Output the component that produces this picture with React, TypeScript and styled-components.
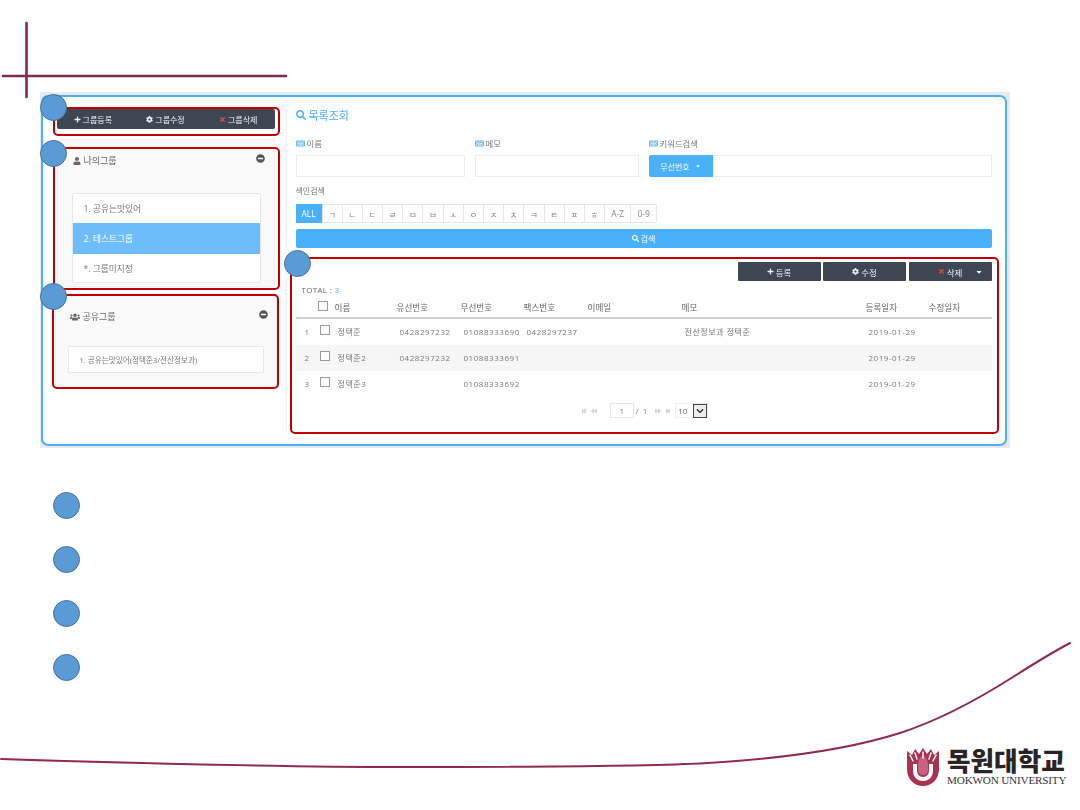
import React from "react";
import styled, { createGlobalStyle } from "styled-components";
import {
  FaPlus, FaCog, FaTimes, FaUser, FaUsers, FaMinusCircle, FaSearch, FaCaretDown,
  FaKeyboard, FaStepBackward, FaBackward, FaForward, FaStepForward, FaChevronDown,
} from "react-icons/fa";

const Global = createGlobalStyle`
  html, body { margin: 0; padding: 0; background: #fff; }
  * { box-sizing: border-box; }
  body { font-family: "Open Sans", "Noto Sans CJK KR", sans-serif; font-size: 8px; color: #777; }
`;

const BLUE = "#4ab0f8";
const DARK = "#3d4651";

const Slide = styled.div`
  position: relative;
  width: 1080px;
  height: 810px;
  background: #fff;
  overflow: hidden;
`;
const Decor = styled.svg`
  position: absolute;
  inset: 0;
`;
const WindowShade = styled.div`
  position: absolute;
  left: 40px;
  top: 92px;
  width: 970px;
  height: 356px;
  background: #e9e9ee;
  padding: 3px 3px 2px 1px;
  filter: blur(0.35px);
`;
const Window = styled.div`
  display: flex;
  width: 100%;
  height: 100%;
  background: #fff;
  border: 2.5px solid ${BLUE};
  border-radius: 7px;
  padding-left: 0.5px;
`;
const Sidebar = styled.aside`
  width: 243px;
  margin: 10px 0 12px;
  padding: 2px 11px 0 13px;
  border-right: 1px dotted #e4e4e4;
  flex: none;
`;
const ButtonBar = styled.div`
  display: flex;
  height: 20px;
  background: ${DARK};
  border-radius: 2px;
`;
const BarButton = styled.div`
  flex: 1;
  display: flex;
  align-items: center;
  justify-content: center;
  gap: 2px;
  color: #eef0f2;
  font-size: 8px;
`;
const IconWrap = styled.span<{ $c?: string; $s?: number }>`
  display: inline-flex;
  color: ${(p) => p.$c || "inherit"};
  font-size: ${(p) => p.$s || 7}px;
`;
const Panel = styled.section<{ $top: number; $h: number; $shift?: number; $w?: number }>`
  margin-top: ${(p) => p.$top}px;
  margin-left: ${(p) => p.$shift || 0}px;
  width: ${(p) => p.$w || 218}px;
  height: ${(p) => p.$h}px;
  background: #f9f9f9;
  border: 1px solid #f0f0f0;
`;
const PanelHead = styled.div<{ $h: number; $pl: number; $pr: number }>`
  display: flex;
  align-items: center;
  justify-content: space-between;
  height: ${(p) => p.$h}px;
  padding: 0 ${(p) => p.$pr}px 0 ${(p) => p.$pl}px;
  color: #666;
  font-size: 9px;
`;
const PanelTitle = styled.div`
  display: flex;
  align-items: center;
  gap: 3px;
`;
const Collapse = styled.span`
  display: inline-flex;
  font-size: 9px;
  color: #555;
  margin-top: -4px;
`;
const GroupList = styled.div<{ $ml: number; $mt: number; $w: number }>`
  margin: ${(p) => p.$mt}px 0 0 ${(p) => p.$ml}px;
  width: ${(p) => p.$w}px;
  background: #fff;
  border: 1px solid #e6e6e6;
  border-radius: 2px;
`;
const GroupItem = styled.div<{ $active?: boolean; $h: number; $pl?: number; $fs?: number }>`
  display: flex;
  align-items: center;
  height: ${(p) => p.$h}px;
  padding-left: ${(p) => p.$pl || 11}px;
  font-size: ${(p) => p.$fs || 8.7}px;
  background: ${(p) => (p.$active ? "#6dbdfb" : "#fff")};
  color: ${(p) => (p.$active ? "#fff" : "#777")};
`;
const Main = styled.main`
  width: 696px;
  margin-left: 9px;
  padding-top: 11px;
  flex: none;
`;
const Title = styled.h2`
  margin: 0;
  display: flex;
  align-items: center;
  gap: 3px;
  height: 14px;
  font-size: 11px;
  font-weight: 400;
  color: ${BLUE};
`;
const Fields = styled.div`
  display: grid;
  grid-template-columns: 169px 164px 343px;
  column-gap: 10px;
  margin-top: 15px;
`;
const Field = styled.div`
  display: flex;
  flex-direction: column;
  gap: 6px;
`;
const FieldLabel = styled.label`
  display: flex;
  align-items: center;
  gap: 2px;
  height: 12px;
  font-size: 8.4px;
  color: #777;
`;
const TextInput = styled.div`
  flex: 1;
  height: 22px;
  background: #fff;
  border: 1px solid #ececec;
`;
const InputGroup = styled.div`
  display: flex;
`;
const GroupDrop = styled.div`
  display: flex;
  align-items: center;
  justify-content: center;
  gap: 5px;
  width: 64px;
  height: 22px;
  background: ${BLUE};
  border-radius: 2px 0 0 2px;
  color: #fff;
  font-size: 8px;
`;
const SectionLabel = styled.div`
  height: 12px;
  margin-top: 8px;
  font-size: 8px;
  color: #777;
`;
const IndexBar = styled.div`
  display: flex;
  width: max-content;
  height: 19px;
  margin-top: 7px;
  border: 1px solid #e6e6e6;
  border-radius: 2px;
`;
const IndexCell = styled.div<{ $w: number; $on?: boolean }>`
  display: flex;
  align-items: center;
  justify-content: center;
  width: ${(p) => p.$w}px;
  margin-top: ${(p) => (p.$on ? -1 : 0)}px;
  margin-bottom: ${(p) => (p.$on ? -1 : 0)}px;
  margin-left: ${(p) => (p.$on ? -1 : 0)}px;
  border-right: 1px solid #e6e6e6;
  background: ${(p) => (p.$on ? BLUE : "#fff")};
  color: ${(p) => (p.$on ? "#fff" : "#888")};
  font-size: 8.5px;
  &:last-child { border-right: 0; }
`;
const SearchButton = styled.div`
  display: flex;
  align-items: center;
  justify-content: center;
  gap: 2px;
  height: 19px;
  margin-top: 6px;
  background: ${BLUE};
  border-radius: 2px;
  color: #fff;
  font-size: 8px;
`;
const Actions = styled.div`
  display: flex;
  justify-content: flex-end;
  gap: 2.5px;
  margin-top: 14px;
`;
const ActionButton = styled.div`
  display: flex;
  align-items: center;
  justify-content: center;
  gap: 2px;
  position: relative;
  width: 83px;
  height: 19px;
  background: ${DARK};
  border-radius: 1px;
  color: #eef0f2;
  font-size: 8.5px;
`;
const ActionCaret = styled.span`
  position: absolute;
  right: 9px;
  display: inline-flex;
  font-size: 8px;
  color: #fff;
`;
const Total = styled.div`
  height: 12px;
  margin-top: 3px;
  padding-left: 6px;
  font-size: 8px;
  color: #666;
  letter-spacing: 0.3px;
  line-height: 12px;
`;
const TotalNum = styled.span`
  color: ${BLUE};
`;
const cols = "22px 17px 62px 64px 63px 64px 94px 184px 63px 1fr";
const HeadRow = styled.div`
  display: grid;
  grid-template-columns: ${cols};
  align-items: center;
  height: 19px;
  margin-top: 4px;
  border-bottom: 2px solid #cfcfcf;
  color: #666;
  font-size: 8.6px;
`;
const Row = styled.div<{ $odd?: boolean }>`
  display: grid;
  grid-template-columns: ${cols};
  align-items: center;
  height: 26px;
  background: ${(p) => (p.$odd ? "#f6f6f6" : "#fff")};
  color: #777;
  font-size: 8px;
  letter-spacing: 0.55px;
`;
const Cell = styled.div<{ $pl?: number }>`
  padding-left: ${(p) => p.$pl ?? 3}px;
  white-space: nowrap;
  padding-bottom: 2px;
`;
const Check = styled.div<{ $raise?: number }>`
  width: 10px;
  height: 10px;
  background: #fff;
  border: 1px solid #9a9a9a;
  margin-top: ${(p) => -(p.$raise || 0)}px;
`;
const Pager = styled.div`
  display: flex;
  align-items: center;
  justify-content: center;
  gap: 4px;
  height: 15px;
  margin-top: 6px;
  padding-left: 2px;
  color: #888;
  font-size: 8px;
`;
const PagerIcon = styled.span`
  display: inline-flex;
  font-size: 6px;
  color: #d2d2d2;
`;
const PageBox = styled.div`
  display: flex;
  align-items: center;
  justify-content: center;
  width: 24px;
  height: 15px;
  margin: 0 -2px 0 9px;
  border: 1px solid #e6e6e6;
  color: #777;
`;
const PageSep = styled.span`
  margin-right: 3px;
  letter-spacing: 1px;
`;
const SizeSelect = styled.div`
  display: flex;
  justify-content: space-between;
  align-items: center;
  width: 33px;
  height: 15px;
  padding-left: 2px;
  border: 1px solid #eee;
  color: #666;
`;
const SizeArrow = styled.span`
  display: flex;
  align-items: center;
  justify-content: center;
  width: 14px;
  height: 14px;
  background: #ededed;
  border: 1px solid #444;
  color: #222;
  font-size: 8px;
`;
const Callout = styled.div<{ $x: number; $y: number; $w: number; $h: number }>`
  position: absolute;
  left: ${(p) => p.$x}px;
  top: ${(p) => p.$y}px;
  width: ${(p) => p.$w}px;
  height: ${(p) => p.$h}px;
  border: 2.5px solid #c00000;
  border-radius: 5px;
`;
const Marker = styled.div`
  width: 27px;
  height: 27px;
  border-radius: 50%;
  background: #5b9bd5;
  border: 1.5px solid #41719c;
`;
const PlacedMarker = styled(Marker)<{ $x: number; $y: number }>`
  position: absolute;
  left: ${(p) => p.$x}px;
  top: ${(p) => p.$y}px;
`;
const Legend = styled.div`
  position: absolute;
  left: 53px;
  top: 492px;
  display: flex;
  flex-direction: column;
  gap: 27px;
`;
const Logo = styled.div`
  position: absolute;
  left: 906px;
  top: 747px;
  display: flex;
  gap: 7px;
`;
const LogoText = styled.div`
  display: flex;
  flex-direction: column;
  gap: 1px;
`;
const LogoKo = styled.div`
  font-family: "Noto Sans CJK KR", sans-serif;
  font-weight: 900;
  font-size: 25.6px;
  line-height: 26px;
  height: 26px;
  letter-spacing: 0;
  color: #2a2426;
  white-space: nowrap;
`;
const LogoEn = styled.div`
  font-family: "Liberation Serif", serif;
  font-size: 11.2px;
  line-height: 12px;
  letter-spacing: -0.2px;
  color: #3a3436;
  white-space: nowrap;
`;

const idx = ["ㄱ","ㄴ","ㄷ","ㄹ","ㅁ","ㅂ","ㅅ","ㅇ","ㅈ","ㅊ","ㅋ","ㅌ","ㅍ","ㅎ"];
const rows = [
  { n: 1, name: "정택준", tel: "0428297232", mob: "01088333690", fax: "0428297237", memo: "전산정보과 정택준" },
  { n: 2, name: "정택준2", tel: "0428297232", mob: "01088333691", fax: "", memo: "" },
  { n: 3, name: "정택준3", tel: "", mob: "01088333692", fax: "", memo: "" },
];
const KeyIcon = () => <IconWrap $c="#6bb8ef" $s={9}><FaKeyboard /></IconWrap>;

export default function App() {
  return (
    <Slide>
      <Global />
      <Decor width="1080" height="810" viewBox="0 0 1080 810">
        <g stroke="#7f2b4c" strokeWidth="2.6" fill="none" strokeLinecap="round">
          <path d="M26.5 23V97" />
          <path d="M3 76H286" />
        </g>
        <path
          d="M1 759 C130 763 280 767 400 767 C500 767 620 767 700 763.5 C780 759 850 749 900 733 C940 720 980 698 1013 677 C1035 663 1055 651 1070 643"
          stroke="#8f2b4d" strokeWidth="2" fill="none" strokeLinecap="round"
        />
      </Decor>

      <WindowShade>
        <Window>
          <Sidebar>
            <ButtonBar>
              <BarButton><IconWrap><FaPlus /></IconWrap>그룹등록</BarButton>
              <BarButton><IconWrap><FaCog /></IconWrap>그룹수정</BarButton>
              <BarButton><IconWrap $c="#e8484a"><FaTimes /></IconWrap>그룹삭제</BarButton>
            </ButtonBar>
            <Panel $top={10} $h={148}>
              <PanelHead $h={41} $pl={15} $pr={9}>
                <PanelTitle><IconWrap $s={8}><FaUser /></IconWrap>나의그룹</PanelTitle>
                <Collapse><FaMinusCircle /></Collapse>
              </PanelHead>
              <GroupList $ml={14} $mt={12} $w={189}>
                <GroupItem $h={29}>1. 공유는맛있어</GroupItem>
                <GroupItem $h={31} $active>2. 테스트그룹</GroupItem>
                <GroupItem $h={28}>*. 그룹미지정</GroupItem>
              </GroupList>
            </Panel>
            <Panel $top={6} $h={93} $shift={-2} $w={222}>
              <PanelHead $h={45} $pl={14} $pr={8}>
                <PanelTitle><IconWrap $s={10}><FaUsers /></IconWrap>공유그룹</PanelTitle>
                <Collapse><FaMinusCircle /></Collapse>
              </PanelHead>
              <GroupList $ml={12} $mt={7} $w={196}>
                <GroupItem $h={25} $pl={11} $fs={7.6}>1. 공유는맛있어(정택준3/전산정보과)</GroupItem>
              </GroupList>
            </Panel>
          </Sidebar>
          <Main>
            <Title><IconWrap $s={10}><FaSearch /></IconWrap>목록조회</Title>
            <Fields>
              <Field>
                <FieldLabel><KeyIcon />이름</FieldLabel>
                <TextInput />
              </Field>
              <Field>
                <FieldLabel><KeyIcon />메모</FieldLabel>
                <TextInput />
              </Field>
              <Field>
                <FieldLabel><KeyIcon />키워드검색</FieldLabel>
                <InputGroup>
                  <GroupDrop>무선번호<IconWrap $s={6}><FaCaretDown /></IconWrap></GroupDrop>
                  <TextInput />
                </InputGroup>
              </Field>
            </Fields>
            <SectionLabel>색인검색</SectionLabel>
            <IndexBar>
              <IndexCell $w={27} $on>ALL</IndexCell>
              {idx.map((c) => <IndexCell key={c} $w={20.2}>{c}</IndexCell>)}
              <IndexCell $w={26}>A-Z</IndexCell>
              <IndexCell $w={25}>0-9</IndexCell>
            </IndexBar>
            <SearchButton><IconWrap><FaSearch /></IconWrap>검색</SearchButton>
            <Actions>
              <ActionButton><IconWrap><FaPlus /></IconWrap>등록</ActionButton>
              <ActionButton><IconWrap><FaCog /></IconWrap>수정</ActionButton>
              <ActionButton>
                <IconWrap $c="#e8484a"><FaTimes /></IconWrap>삭제
                <ActionCaret><FaCaretDown /></ActionCaret>
              </ActionButton>
            </Actions>
            <Total>TOTAL : <TotalNum>3</TotalNum></Total>
            <HeadRow>
              <span />
              <Check $raise={5} />
              <Cell $pl={0}>이름</Cell>
              <Cell $pl={0}>유선번호</Cell>
              <Cell $pl={0}>무선번호</Cell>
              <Cell $pl={0}>팩스번호</Cell>
              <Cell $pl={0}>이메일</Cell>
              <Cell $pl={0}>메모</Cell>
              <Cell $pl={0}>등록일자</Cell>
              <Cell $pl={0}>수정일자</Cell>
            </HeadRow>
            {rows.map((r) => (
              <Row key={r.n} $odd={r.n === 2}>
                <Cell $pl={9}>{r.n}</Cell>
                <Cell $pl={2}><Check $raise={2} /></Cell>
                <Cell>{r.name}</Cell>
                <Cell>{r.tel}</Cell>
                <Cell>{r.mob}</Cell>
                <Cell>{r.fax}</Cell>
                <Cell />
                <Cell>{r.memo}</Cell>
                <Cell>2019-01-29</Cell>
                <Cell />
              </Row>
            ))}
            <Pager>
              <PagerIcon><FaStepBackward /></PagerIcon>
              <PagerIcon><FaBackward /></PagerIcon>
              <PageBox>1</PageBox>
              <PageSep>/ 1</PageSep>
              <PagerIcon><FaForward /></PagerIcon>
              <PagerIcon><FaStepForward /></PagerIcon>
              <SizeSelect>10<SizeArrow><FaChevronDown /></SizeArrow></SizeSelect>
            </Pager>
          </Main>
        </Window>
      </WindowShade>

      <Callout $x={53} $y={107} $w={227} $h={29} />
      <Callout $x={53} $y={147} $w={227} $h={143} />
      <Callout $x={52} $y={294} $w={227} $h={95} />
      <Callout $x={290} $y={257} $w={709} $h={177} />
      <PlacedMarker $x={40} $y={94} />
      <PlacedMarker $x={40} $y={140} />
      <PlacedMarker $x={40} $y={283} />
      <PlacedMarker $x={284} $y={250} />

      <Legend>
        <Marker /><Marker /><Marker /><Marker />
      </Legend>

      <Logo>
        <svg width="34" height="40" viewBox="0 0 34 40">
          <path d="M1 4 L6 8 L9 2 L13 7 L17 1 L21 7 L25 2 L28 8 L33 4 V22 C33 32 26 39 17 39 C8 39 1 32 1 22 Z" fill="#a8324f" />
          <path d="M7 17 V23 C7 30 11 34 17 34 C23 34 27 30 27 23 V17 H23 V23 C23 27 21 30 17 30 C13 30 11 27 11 23 V17 Z" fill="#fff" />
          <path d="M12 18 C12 12 15 10 17 8 C19 10 22 12 22 18 V23 C22 26 20 28 17 28 C14 28 12 26 12 23 Z" fill="#c4647e" />
          <g stroke="#fff" strokeWidth="1.4" fill="none" strokeLinecap="round">
            <path d="M7 14 L4 8" />
            <path d="M11 12 L9 6" />
            <path d="M17 11 V5" />
            <path d="M23 12 L25 6" />
            <path d="M27 14 L30 8" />
          </g>
        </svg>
        <LogoText>
          <LogoKo>목원대학교</LogoKo>
          <LogoEn>MOKWON UNIVERSITY</LogoEn>
        </LogoText>
      </Logo>
    </Slide>
  );
}
